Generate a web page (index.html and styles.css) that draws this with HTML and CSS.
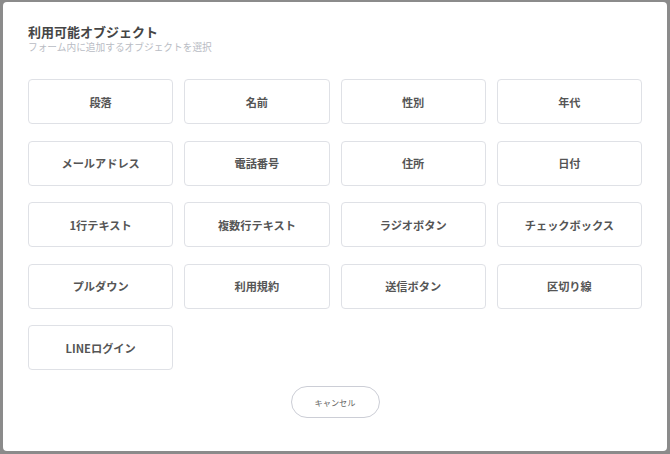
FILE: index.html
```html
<!DOCTYPE html>
<html>
<head>
    <title>利用可能オブジェクト</title>
    <link rel="stylesheet" href="styles.css">
</head>
<body>
    <div class="backdrop">
        <div class="modal">
            <div class="modal-header">
                <h2>利用可能オブジェクト</h2>
                <p>フォーム内に追加するオブジェクトを選択</p>
            </div>

            <div class="object-grid">
                <button class="object-button">段落</button>
                <button class="object-button">名前</button>
                <button class="object-button">性別</button>
                <button class="object-button">年代</button>
                <button class="object-button">メールアドレス</button>
                <button class="object-button">電話番号</button>
                <button class="object-button">住所</button>
                <button class="object-button">日付</button>
                <button class="object-button">1行テキスト</button>
                <button class="object-button">複数行テキスト</button>
                <button class="object-button">ラジオボタン</button>
                <button class="object-button">チェックボックス</button>
                <button class="object-button">プルダウン</button>
                <button class="object-button">利用規約</button>
                <button class="object-button">送信ボタン</button>
                <button class="object-button">区切り線</button>
                <button class="object-button">LINEログイン</button>
            </div>

            <div class="modal-footer">
                <button class="cancel-button">キャンセル</button>
            </div>
        </div>
    </div>
</body>
</html>
```

FILE: styles.css
```css
html, body {
    margin: 0;
    height: 100%;
}

body {
    font-family: "Noto Sans CJK JP", "Noto Sans", sans-serif;
    background: #8b8b8b;
    color: #444;
}

.backdrop {
    height: 100%;
    box-sizing: border-box;
    padding: 2px 3px 3px 3px;
}

.modal {
    height: 100%;
    box-sizing: border-box;
    background: #fff;
    border-radius: 4px;
    padding: 21px 25px 0 25px;
}

.modal-header h2 {
    margin: 0;
    font-size: 13px;
    line-height: 18px;
    font-weight: 700;
    color: #454545;
}

.modal-header p {
    margin: 0;
    font-size: 9.7px;
    line-height: 12px;
    color: #b9bcc4;
}

.object-grid {
    display: grid;
    grid-template-columns: repeat(4, 1fr);
    column-gap: 11px;
    row-gap: 16.5px;
    margin-top: 26px;
}

.object-button {
    height: 45px;
    background: #fff;
    border: 1px solid #dfe1e6;
    border-radius: 4px;
    font-family: inherit;
    font-size: 11.2px;
    font-weight: 700;
    color: #555;
    cursor: pointer;
}

.modal-footer {
    display: flex;
    justify-content: center;
    margin-top: 16px;
}

.cancel-button {
    width: 89px;
    height: 32px;
    background: #fff;
    border: 1px solid #ccced6;
    border-radius: 16px;
    font-family: inherit;
    font-size: 8.2px;
    color: #666;
    cursor: pointer;
}
```
